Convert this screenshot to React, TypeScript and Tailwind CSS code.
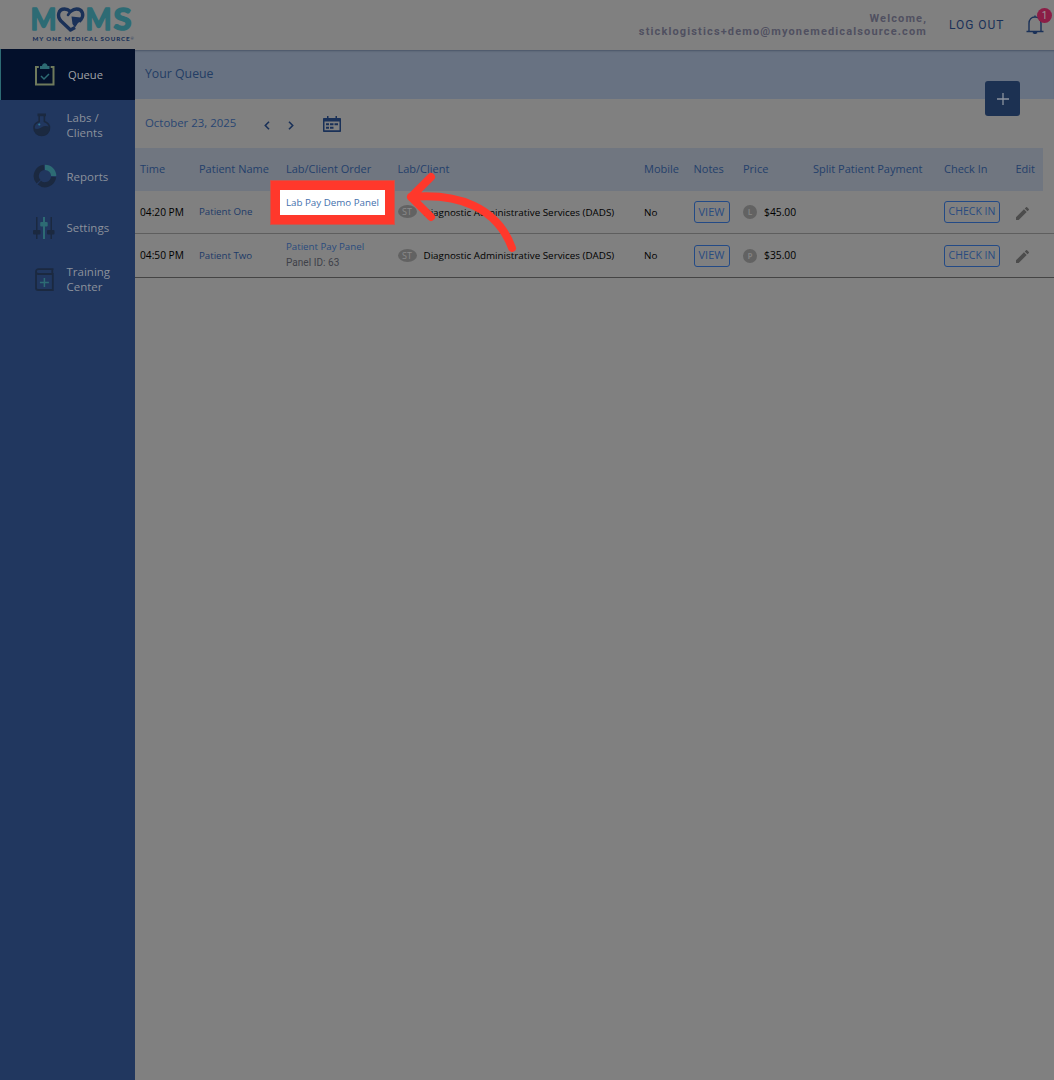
import React from 'react';

const ClipboardIcon = () => (
  <svg width="20" height="23" viewBox="0 0 20 23" fill="none">
    <path d="M3.800 4H1V21.500H18.500V4H15.700" stroke="#6f7a5c" strokeWidth="2" />
    <path d="M5 6V3H7C7.300 1 8.500 .2 9.800 .2S12.200 1 12.500 3H14.500V6Z" fill="#2d6b74" />
    <path d="M6 13L9 16L14 11" stroke="#2d6b74" strokeWidth="1.500" />
  </svg>
);

const FlaskIcon = () => (
  <svg width="18" height="24" viewBox="0 0 18 24" fill="none">
    <path d="M6.200 2V8.500C3 9.500 1 12 1 15C1 19.500 4.500 22.500 8.800 22.500S16.500 19.500 16.500 15C16.500 12 14.500 9.500 11.400 8.500V2" stroke="#1b2940" strokeWidth="1.600" />
    <path d="M4.500 .5H13V3.200H4.500Z" fill="#1b2940" />
    <path d="M1 15C4 17 7 15.500 9 14S14 12.500 16.500 14C17 19 13.500 22.500 8.800 22.500S1 19.500 1 15Z" fill="#1b2940" />
    <circle cx="6.300" cy="11.500" r="1.100" fill="#2d7a96" />
  </svg>
);

const DonutIcon = () => (
  <svg width="24" height="24" viewBox="0 0 24 24" fill="none" strokeWidth="5.200">
    <path d="M12 3.300A8.700 8.700 0 0 1 20.700 12" stroke="#2d6b74" />
    <path d="M20.600 13A8.700 8.700 0 0 1 6.300 18.600" stroke="#1b2940" />
    <path d="M5.500 17.800A8.700 8.700 0 0 1 11 3.350" stroke="#1b2940" />
  </svg>
);

const SlidersIcon = () => (
  <svg width="22" height="22" viewBox="0 0 22 22">
    <path d="M3 0H4.500V22H3ZM17.500 0H19V22H17.500Z" fill="#1b2940" />
    <path d="M10 0H12V22H10Z" fill="#2d6b74" />
    <rect x="0" y="13" width="7.500" height="4.500" rx="1" fill="#1b2940" />
    <rect x="14" y="13" width="7.500" height="4.500" rx="1" fill="#1b2940" />
    <rect x="7.200" y="5" width="7.500" height="4.500" rx="1" fill="#2d6b74" />
  </svg>
);

const BookIcon = () => (
  <svg className="ml-[2px]" width="19" height="23" viewBox="0 0 19 23" fill="none">
    <path d="M18.500 1.200H3.500C2 1.200 1 2.200 1 3.500V20C1 21.300 2 22 3.200 22H17.800V6H3.500C2 6 1 5 1 3.500M17.300 1V6" stroke="#1b2940" strokeWidth="1.800" />
    <path d="M9.400 10V19M4.900 14.500H13.900" stroke="#2d6b74" strokeWidth="1.500" />
  </svg>
);

const navItems = [
  { label: 'Labs /\nClients', icon: <FlaskIcon />, box: 'h-[50px]' },
  { label: 'Reports', icon: <DonutIcon />, box: 'h-[52px]' },
  { label: 'Settings', icon: <SlidersIcon />, box: 'h-[51px]' },
  { label: 'Training\nCenter', icon: <BookIcon />, box: 'h-[52px]' },
];

const columns = ['Time', 'Patient Name', 'Lab/Client Order', 'Lab/Client', 'Mobile', 'Notes', 'Price', 'Split Patient Payment', 'Check In', 'Edit'];

const rows = [
  { time: '04:20 PM', patient: 'Patient One', order: '', panel: '', payer: 'L', price: '$45.00' },
  { time: '04:50 PM', patient: 'Patient Two', order: 'Patient Pay Panel', panel: 'Panel ID: 63', payer: 'P', price: '$35.00' },
];

const gridCols = 'grid grid-cols-[59px_87px_111.500px_246.500px_49.500px_49.500px_70px_131px_71.500px_29px] pl-[5px] items-center whitespace-nowrap';

const Logo = () => (
  <svg width="110" height="40" viewBox="0 0 110 40" className="ml-[29px] mt-[3px] overflow-visible" fontFamily="Lato, sans-serif">
    <g fill="#2d6b74" stroke="#2d6b74" strokeWidth="1.600" strokeLinejoin="round" fontSize="30" fontWeight="700">
      <text x="1.500" y="26.500" textLength="26" lengthAdjust="spacingAndGlyphs">M</text>
      <text x="56.500" y="26.500" textLength="26" lengthAdjust="spacingAndGlyphs">M</text>
      <text x="84.500" y="26.500" textLength="18" lengthAdjust="spacingAndGlyphs">S</text>
    </g>
    <g fill="none" stroke="#1a3158" strokeWidth="3.400" strokeLinejoin="round">
      <path d="M46 24.500L41.500 27L32 18C27.500 13 29.500 6 35.500 6C38 6 39.800 7 41.500 8.500C43.500 7 45 6 47.500 6C53.500 6 55.500 12 52 16.500L50 18.500" />
      <path d="M39 12L41.500 8.500" strokeWidth="2.600" strokeLinecap="round" />
    </g>
    <path d="M42.500 13.500L51.500 14.500L52 18L49 20L46 24.500L43.500 21Z" fill="#1a3158" />
    <text x="3.500" y="37.500" fill="#1a3158" fontSize="6.200" fontWeight="900" textLength="97" lengthAdjust="spacing">MY ONE MEDICAL SOURCE</text>
    <text x="101.500" y="36.500" fill="#1a3158" fontSize="4">®</text>
  </svg>
);

const TopBar = () => (
  <header className="relative z-10 flex h-[50px] w-full justify-between bg-[#808080]">
    <Logo />
    <div className="flex">
      <div className="mt-[12px] text-right font-[Roboto] text-[11px] leading-[13px] font-bold tracking-[1.140px] text-[#505060]">
        <p>Welcome,</p>
        <p>sticklogistics+demo@myonemedicalsource.com</p>
      </div>
      <span className="mt-[17px] ml-[21px] w-[57px] pl-px font-[Roboto] text-[12px] leading-[17px] tracking-[0.950px] whitespace-nowrap text-[#1a3158]">LOG OUT</span>
      <div className="relative ml-[21px] h-[34px] w-[28px]">
        <svg className="mt-[15px]" width="18" height="19" viewBox="0 0 18 19" fill="none" stroke="#1a3158" strokeWidth="1.400">
          <path d="M.5 16.500H17.500M3 16V8.500C3 4.500 5.500 2 9 2S15 4.500 15 8.500V16M9 2V.5" />
          <path d="M7 17.500H11L9 18.500Z" fill="#1a3158" />
        </svg>
        <span className="absolute top-[8px] left-[11px] flex h-[15px] w-[15px] items-center justify-center rounded-full bg-[#8b1e46] font-[Roboto] text-[10px] text-[#999]">1</span>
      </div>
    </div>
  </header>
);

const Sidebar = () => (
  <nav className="relative z-20 -mt-px w-[135px] shrink-0 bg-[#21375f] text-[11.500px] leading-[15px] text-[#8b919c]">
    <div className="flex h-[51px] items-center border-l border-[#2d6b74] bg-[#03102b]">
      <div className="ml-[34px] w-[33px]"><ClipboardIcon /></div>
      <span className="text-[11.200px] text-[#a0a2a6]">Queue</span>
    </div>
    {navItems.map((item) => (
      <div key={item.label} className={`flex items-center ${item.box}`}>
        <div className="ml-[33px] flex w-[33.500px]">{item.icon}</div>
        <span className="whitespace-pre-line">{item.label}</span>
      </div>
    ))}
  </nav>
);

const Queue = () => (
  <main className="min-w-0 flex-1">
    <div className="flex h-[49px] items-center justify-between bg-[#687282] pl-[10px] text-[12.300px] text-[#233d64] shadow-[inset_0_2px_2px_-1px_#4a5468]">
      <span>Your Queue</span>
      <button className="relative top-[24px] mr-[34px] flex h-[35px] w-[35px] items-center justify-center rounded-[3px] bg-[#1c3152]">
        <svg width="12" height="12" viewBox="0 0 12 12" stroke="#8c939e" strokeWidth="1.300"><path d="M6 0V12M0 6H12" /></svg>
      </button>
    </div>
    <div className="flex h-[49px] items-center pl-[10px] text-[#294672]">
      <span className="w-[119px] pb-px text-[11.400px]">October 23, 2025</span>
      <svg className="mt-[3px]" width="6" height="9" viewBox="0 0 6 9" fill="none" stroke="#1a3158" strokeWidth="1.600"><path d="M5 .7L1.300 4.500L5 8.300" /></svg>
      <svg className="mt-[3px] ml-[18px]" width="6" height="9" viewBox="0 0 6 9" fill="none" stroke="#1a3158" strokeWidth="1.600"><path d="M1 .7L4.700 4.500L1 8.300" /></svg>
      <svg className="ml-[29px]" width="18" height="16" viewBox="0 0 18 16">
        <path d="M1 2H4V0H5.500V2H12.500V0H14V2H17C17.600 2 18 2.400 18 3V15C18 15.600 17.600 16 17 16H1C.4 16 0 15.600 0 15V3C0 2.400.4 2 1 2ZM1.500 5.500V14.300H16.500V5.500Z" fill="#1a3158" fillRule="evenodd" />
        <path d="M3 7.300H6V9.200H3ZM7 7.300H10.500V9.200H7ZM11.500 7.300H15V9.200H11.500ZM3 10.800H6V12.700H3ZM7 10.800H10.500V12.700H7Z" fill="#1a3158" />
      </svg>
    </div>
    <div className={`${gridCols} mr-[11px] h-[43px] bg-[#707680] pb-px text-[11px] text-[#24406b]`}>
      {columns.map((name) => <span key={name}>{name}</span>)}
    </div>
    {rows.map((row, i) => (
      <div key={row.time} className={`${gridCols} border-b text-[9.850px] text-black ${i === 0 ? 'h-[43px] border-[#5e5e5e]' : 'h-[44px] border-[#444]'}`}>
        <span className="pt-px text-[10.200px]">{row.time}</span>
        <span className="pt-px text-[9.700px] text-[#1d3a68]">{row.patient}</span>
        <div className="-mt-[2px] leading-[16px]">
          <p className="text-[9.700px] text-[#294b7e]">{row.order}</p>
          <p className="font-[Roboto] text-[10px] tracking-[0.050px] text-[#3f4149]">{row.panel}</p>
        </div>
        <div className="flex items-center">
          <span className="mr-[7px] flex h-[13px] w-[19px] items-center justify-center rounded-[50%] bg-[#626262] text-[9px] text-[#8a8a8a]">ST</span>
          <span className="text-[9.830px]">Diagnostic Administrative Services (DADS)</span>
        </div>
        <span>No</span>
        <button className="h-[22px] w-[36px] rounded-[3px] border border-[#234a86] text-[11px] text-[#284b80]">VIEW</button>
        <div className="flex items-center">
          <span className="mr-[7px] flex h-[14px] w-[14px] items-center justify-center rounded-full bg-[#626262] text-[8px] font-bold text-[#808080]">{row.payer}</span>
          <span className="pt-px text-[10.300px]">{row.price}</span>
        </div>
        <span />
        <button className="h-[22px] w-[56px] rounded-[3px] border border-[#234a86] text-[10.500px] text-[#284b80]">CHECK IN</button>
        <svg className="mt-[2px]" width="13" height="13" viewBox="3 3 18 18" fill="#4c4c4c">
          <path d="M3 17.250V21h3.750L17.810 9.940l-3.750-3.750L3 17.250zM20.710 7.040a1 1 0 0 0 0-1.410l-2.340-2.340a1 1 0 0 0-1.410 0l-1.830 1.830 3.750 3.750 1.830-1.830z" />
        </svg>
      </div>
    ))}
  </main>
);

const Highlight = () => (
  <>
    <div className="absolute top-[180px] left-[270px] flex h-[45px] w-[125px] items-center border border-[#c9564e] bg-[#ff382b] pl-[9px]">
      <div className="flex h-[25px] w-[105px] items-center bg-white pt-px pl-[6px] text-[9.750px] whitespace-nowrap text-[#4470ad]">Lab Pay Demo Panel</div>
    </div>
    <svg className="absolute top-[165px] left-[400px]" width="130" height="100" viewBox="400 165 130 100" fill="none" stroke="#ff382b" strokeWidth="8" strokeLinecap="round" strokeLinejoin="round">
      <path d="M431 177L411 197L431 217M411 197C458 193 497 207 512 248" />
    </svg>
  </>
);

export default function App() {
  return (
    <div className="relative flex h-[1080px] w-[1054px] flex-col overflow-hidden bg-[#808080] font-['Open_Sans','Noto_Sans',sans-serif]">
      <TopBar />
      <div className="flex flex-1">
        <Sidebar />
        <Queue />
      </div>
      <Highlight />
    </div>
  );
}
